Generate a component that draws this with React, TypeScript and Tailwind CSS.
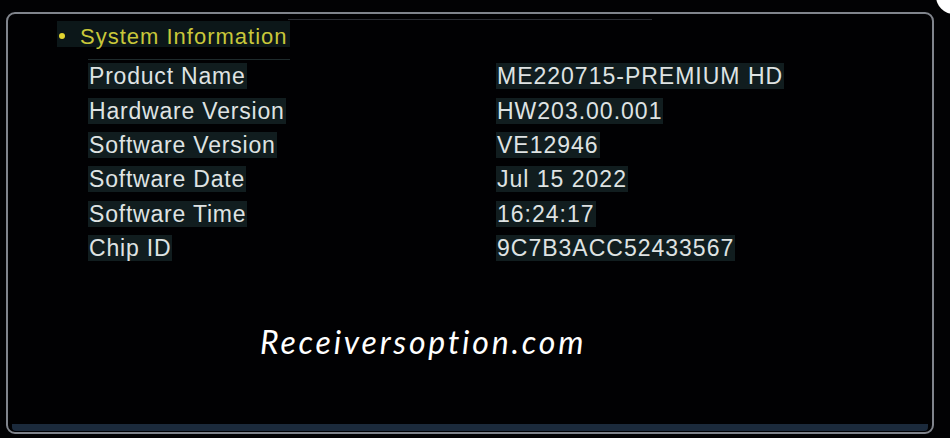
const rows: [string, string][] = [
  ["Product Name", "ME220715-PREMIUM HD"],
  ["Hardware Version", "HW203.00.001"],
  ["Software Version", "VE12946"],
  ["Software Date", "Jul 15 2022"],
  ["Software Time", "16:24:17"],
  ["Chip ID", "9C7B3ACC52433567"],
];

export default function App() {
  return (
    <div className="relative w-[950px] h-[438px] overflow-hidden bg-[#020204] font-[family-name:Liberation_Sans,Arial,sans-serif]">
      {/* corner decoration */}
      <div className="absolute -right-[22px] -top-[30px] w-[36px] h-[44px] rounded-full bg-white" />

      <div className="ml-[6px] mt-[12px] w-[928px] h-[422px] rounded-[9px] border-2 border-[#80848c] bg-[#010103] flex flex-col">
        <div className="mx-[280px] mt-[5px] h-px bg-[#2a2c33]" />

        {/* title */}
        <div className="ml-[49px] mt-[1px] flex items-center w-[233px] h-[26px] bg-[#0c1719]">
          <span className="ml-[2px] mt-[3px] w-[6px] h-[6px] rounded-full bg-[#e2d530]" />
          <span className="ml-[15px] mt-[5px] text-[22px] tracking-[1px] leading-none text-[#c9c83a]">
            System Information
          </span>
        </div>

        <div className="ml-[80px] mt-[12px] w-[202px] h-px bg-[#1e2a2c]" />

        {/* rows */}
        <div className="flex flex-col">
          {rows.map(([k, v]) => (
            <div key={k} className="flex items-center h-[34.4px]">
              <div className="w-[488px] pl-[80px]">
                <span className="bg-[#111d1f] px-[1px] text-[23px] tracking-[0.8px] leading-[26px] text-[#dfe3e3]">
                  {k}
                </span>
              </div>
              <div>
                <span className="bg-[#111d1f] px-[1px] text-[23px] tracking-[1px] leading-[26px] text-[#dfe3e3]">
                  {v}
                </span>
              </div>
            </div>
          ))}
        </div>

        <div className="flex-1 flex items-start pl-[252px] pt-[52px]">
          <span className="italic text-[32px] tracking-[2.8px] text-white font-[family-name:Lato,sans-serif]">
            Receiversoption.com
          </span>
        </div>

        <div className="h-[7px] mx-[4px] mb-[1px] bg-[#1b2a3c] rounded-b-[4px]" />
      </div>
    </div>
  );
}
